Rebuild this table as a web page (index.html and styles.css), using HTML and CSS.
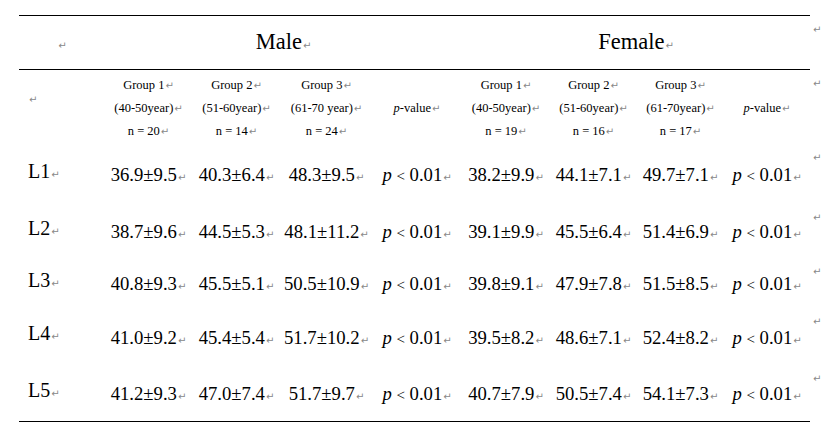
FILE: index.html
```html
<!DOCTYPE html>
<html>
<head>
<meta charset="utf-8">
<link rel="stylesheet" href="styles.css">
</head>
<body>
<table class="tbl">
  <colgroup>
    <col class="c-label">
    <col class="c-g1"><col class="c-g2"><col class="c-g3"><col class="c-p">
    <col class="c-fg1"><col class="c-fg2"><col class="c-fg3"><col class="c-fp">
    <col class="c-end">
  </colgroup>
  <tr class="r-sex">
    <td class="ruled lab-center"><span class="pm">↵</span></td>
    <td class="ruled sex" colspan="4">Male<span class="pm">↵</span></td>
    <td class="ruled sex" colspan="4">Female<span class="pm">↵</span></td>
    <td class="end"><span class="pm">↵</span></td>
  </tr>
  <tr class="r-grp">
    <td class="lab lab-grp"><span class="pm">↵</span></td>
    <td class="grp">Group 1<span class="pm">↵</span><br>(40-50year)<span class="pm">↵</span><br>n = 20<span class="pm">↵</span></td>
    <td class="grp">Group 2<span class="pm">↵</span><br>(51-60year)<span class="pm">↵</span><br>n = 14<span class="pm">↵</span></td>
    <td class="grp">Group 3<span class="pm">↵</span><br>(61-70 year)<span class="pm">↵</span><br>n = 24<span class="pm">↵</span></td>
    <td class="grp"><i>p</i>-value<span class="pm">↵</span></td>
    <td class="grp">Group 1<span class="pm">↵</span><br>(40-50year)<span class="pm">↵</span><br>n = 19<span class="pm">↵</span></td>
    <td class="grp">Group 2<span class="pm">↵</span><br>(51-60year)<span class="pm">↵</span><br>n = 16<span class="pm">↵</span></td>
    <td class="grp">Group 3<span class="pm">↵</span><br>(61-70year)<span class="pm">↵</span><br>n = 17<span class="pm">↵</span></td>
    <td class="grp"><i>p</i>-value<span class="pm">↵</span></td>
    <td class="end"><span class="pm">↵</span></td>
  </tr>
  <tr class="r-l1">
    <td class="lab">L1<span class="pm">↵</span></td>
    <td class="val">36.9±9.5<span class="pm">↵</span></td>
    <td class="val">40.3±6.4<span class="pm">↵</span></td>
    <td class="val">48.3±9.5<span class="pm">↵</span></td>
    <td class="val"><i>p</i> <span class="lt">&lt;</span> 0.01<span class="pm">↵</span></td>
    <td class="val">38.2±9.9<span class="pm">↵</span></td>
    <td class="val">44.1±7.1<span class="pm">↵</span></td>
    <td class="val">49.7±7.1<span class="pm">↵</span></td>
    <td class="val"><i>p</i> <span class="lt">&lt;</span> 0.01<span class="pm">↵</span></td>
    <td class="end"><span class="pm">↵</span></td>
  </tr>
  <tr class="r-l2">
    <td class="lab">L2<span class="pm">↵</span></td>
    <td class="val">38.7±9.6<span class="pm">↵</span></td>
    <td class="val">44.5±5.3<span class="pm">↵</span></td>
    <td class="val">48.1±11.2<span class="pm">↵</span></td>
    <td class="val"><i>p</i> <span class="lt">&lt;</span> 0.01<span class="pm">↵</span></td>
    <td class="val">39.1±9.9<span class="pm">↵</span></td>
    <td class="val">45.5±6.4<span class="pm">↵</span></td>
    <td class="val">51.4±6.9<span class="pm">↵</span></td>
    <td class="val"><i>p</i> <span class="lt">&lt;</span> 0.01<span class="pm">↵</span></td>
    <td class="end"><span class="pm">↵</span></td>
  </tr>
  <tr class="r-l3">
    <td class="lab">L3<span class="pm">↵</span></td>
    <td class="val">40.8±9.3<span class="pm">↵</span></td>
    <td class="val">45.5±5.1<span class="pm">↵</span></td>
    <td class="val">50.5±10.9<span class="pm">↵</span></td>
    <td class="val"><i>p</i> <span class="lt">&lt;</span> 0.01<span class="pm">↵</span></td>
    <td class="val">39.8±9.1<span class="pm">↵</span></td>
    <td class="val">47.9±7.8<span class="pm">↵</span></td>
    <td class="val">51.5±8.5<span class="pm">↵</span></td>
    <td class="val"><i>p</i> <span class="lt">&lt;</span> 0.01<span class="pm">↵</span></td>
    <td class="end"><span class="pm">↵</span></td>
  </tr>
  <tr class="r-l4">
    <td class="lab">L4<span class="pm">↵</span></td>
    <td class="val">41.0±9.2<span class="pm">↵</span></td>
    <td class="val">45.4±5.4<span class="pm">↵</span></td>
    <td class="val">51.7±10.2<span class="pm">↵</span></td>
    <td class="val"><i>p</i> <span class="lt">&lt;</span> 0.01<span class="pm">↵</span></td>
    <td class="val">39.5±8.2<span class="pm">↵</span></td>
    <td class="val">48.6±7.1<span class="pm">↵</span></td>
    <td class="val">52.4±8.2<span class="pm">↵</span></td>
    <td class="val"><i>p</i> <span class="lt">&lt;</span> 0.01<span class="pm">↵</span></td>
    <td class="end"><span class="pm">↵</span></td>
  </tr>
  <tr class="r-l5">
    <td class="lab bottom">L5<span class="pm">↵</span></td>
    <td class="val bottom">41.2±9.3<span class="pm">↵</span></td>
    <td class="val bottom">47.0±7.4<span class="pm">↵</span></td>
    <td class="val bottom">51.7±9.7<span class="pm">↵</span></td>
    <td class="val bottom"><i>p</i> <span class="lt">&lt;</span> 0.01<span class="pm">↵</span></td>
    <td class="val bottom">40.7±7.9<span class="pm">↵</span></td>
    <td class="val bottom">50.5±7.4<span class="pm">↵</span></td>
    <td class="val bottom">54.1±7.3<span class="pm">↵</span></td>
    <td class="val bottom"><i>p</i> <span class="lt">&lt;</span> 0.01<span class="pm">↵</span></td>
    <td class="end"><span class="pm">↵</span></td>
  </tr>
</table>
</body>
</html>
```

FILE: styles.css
```css
html, body {
  margin: 0;
  padding: 0;
  background: #ffffff;
}
body {
  padding: 15px 0 0 19px;
  font-family: "Liberation Serif", "Times New Roman", serif;
  color: #000;
}
.tbl {
  border-collapse: collapse;
  border-spacing: 0;
  table-layout: fixed;
  width: 806px;
}
.c-label { width: 86px; }
.c-g1 { width: 87px; }
.c-g2 { width: 89px; }
.c-g3 { width: 91px; }
.c-p { width: 90px; }
.c-fg1 { width: 88px; }
.c-fg2 { width: 87px; }
.c-fg3 { width: 87px; }
.c-fp { width: 86px; }
.c-end { width: 15px; }

.tbl td {
  padding: 0;
  vertical-align: middle;
  text-align: center;
  white-space: nowrap;
}
.ruled {
  border-top: 1px solid #000;
  border-bottom: 1px solid #000;
}
.bottom {
  border-bottom: 1px solid #000;
}

.r-sex { height: 54px; }
.r-grp { height: 74px; }
.r-l1 { height: 60px; }
.r-l2 { height: 54px; }
.r-l3 { height: 50px; }
.r-l4 { height: 57px; }
.r-l5 { height: 57px; }

.pm {
  font-family: "DejaVu Sans", sans-serif;
  font-size: 10px;
  color: #888888;
  font-style: normal;
  margin-left: 1px;
}

.sex {
  font-size: 22.5px;
  line-height: 26px;
  padding-top: 3px !important;
}
.grp {
  font-size: 12.5px;
  line-height: 22px;
  padding-top: 3px !important;
}
.val {
  font-size: 18.7px;
  line-height: 22px;
  padding-top: 6px !important;
}
.val .lt {
  font-size: 15px;
}
.lab {
  text-align: left !important;
  padding-left: 9px !important;
  font-size: 20px;
  line-height: 22px;
  padding-bottom: 2px !important;
}
.lab-grp {
  padding-bottom: 18px !important;
}
.lab-center {
  text-align: center;
  padding-top: 2px !important;
}
.end {
  vertical-align: top !important;
  text-align: left !important;
  padding-left: 2px !important;
  padding-top: 6px !important;
  line-height: 12px;
}
```
